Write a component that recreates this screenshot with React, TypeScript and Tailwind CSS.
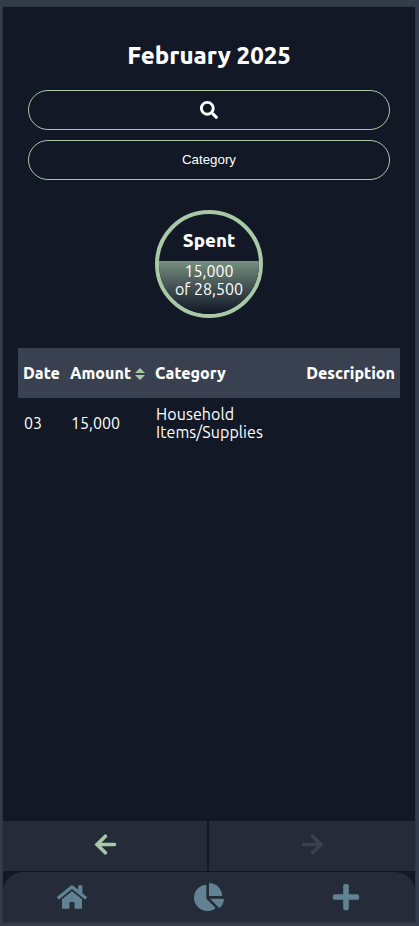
import React from "react";
import { FaSearch, FaHome, FaChartPie, FaPlus } from "react-icons/fa";

function Arrow({ className = "" }: { className?: string }) {
  return (
    <svg width="24" height="24" viewBox="0 0 24 24" fill="none" stroke="currentColor" strokeWidth="3.6" strokeLinecap="round" strokeLinejoin="miter" className={className}>
      <path d="M12.4 2.2 4 10.5l8.4 8.3M5 10.5h16.5" />
    </svg>
  );
}

function SortMark() {
  return (
    <svg width="10" height="12" viewBox="0 0 10 12" fill="currentColor" className="mt-0.5 text-[#a8c8a6]">
      <path d="M5 0 10 5H0ZM0 7h10l-5 5Z" />
    </svg>
  );
}

export default function App() {
  return (
    <div className="flex h-[926px] w-[419px] flex-col bg-[#343c4b] pt-1.5 pr-[3px] pb-[3px] pl-0.5 font-['Ubuntu','Noto_Sans',sans-serif] text-base leading-[18px] text-white">
      <div className="flex flex-1 flex-col border border-[#2f343f] bg-[#121826]">
        <main className="flex flex-1 flex-col px-[15px]">
          <h1 className="mt-[35px] h-7 text-center text-2xl leading-7 font-extrabold">February 2025</h1>
          <div className="mt-5 flex flex-col gap-2.5 px-2.5">
            <button className="flex h-10 items-center justify-center rounded-[20px] border border-[#a8c8a6]">
              <FaSearch size={18} />
            </button>
            <button className="h-10 rounded-[20px] border border-[#a8c8a6] font-['Liberation_Sans',sans-serif] text-[13.333px]">Category</button>
          </div>
          <section className="mt-[30px] flex h-27 w-27 flex-col items-center self-center overflow-hidden rounded-full border-4 border-[#a8c8a6]">
            <h2 className="mt-[17px] h-[30px] text-[18.72px] leading-[20px] font-extrabold">Spent</h2>
            <div className="w-full flex-1 bg-linear-to-b from-[#789080] to-[#121826] pt-px text-center">
              <p>15,000</p>
              <p>of 28,500</p>
            </div>
          </section>
          <div className="mt-[30px] grid h-[50px] grid-cols-[47px_85px_1fr_auto] items-center bg-[#394150] px-[5px] font-extrabold">
            <span>Date</span>
            <span className="flex items-center gap-1">Amount<SortMark /></span>
            <span>Category</span>
            <span>Description</span>
          </div>
          <div className="grid h-[50px] grid-cols-[47px_85px_1fr] items-center px-1.5">
            <span>03</span>
            <span>15,000</span>
            <span className="tracking-[0.08px]">Household<br />Items/Supplies</span>
          </div>
        </main>
        <div className="flex h-[50px] gap-0.5">
          <button className="flex w-[204px] items-center justify-center bg-[#252b38] text-[#a8c8a6]"><Arrow /></button>
          <button className="flex flex-1 items-center justify-center bg-[#252b38] pl-px text-[#3a404e]"><Arrow className="-scale-x-100" /></button>
        </div>
        <nav className="mt-px grid h-[50px] grid-cols-3 place-items-center rounded-t-[20px] bg-[#252b38] text-[#618292]">
          <FaHome size={30} />
          <FaChartPie size={30} />
          <FaPlus size={30} />
        </nav>
      </div>
    </div>
  );
}
